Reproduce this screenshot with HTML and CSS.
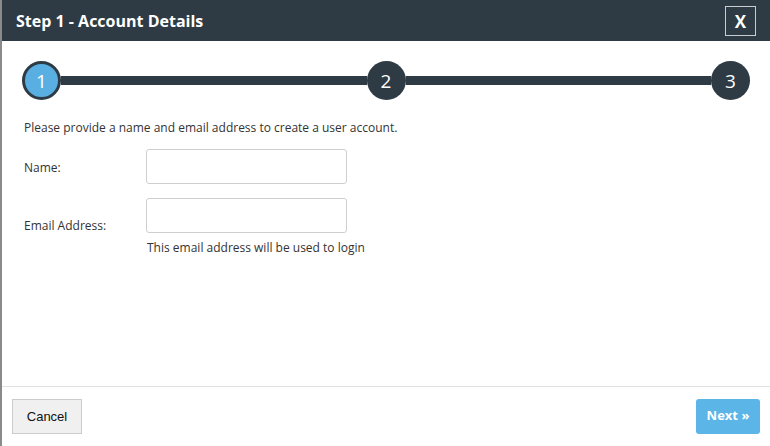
FILE: index.html
```html
<!DOCTYPE html>
<html>
<head>
<meta charset="utf-8">
<link rel="stylesheet" href="styles.css">
</head>
<body>
<div class="modal">
  <div class="header">
    <h1 class="title">Step 1 - Account Details</h1>
    <button class="close">X</button>
  </div>
  <div class="body">
    <div class="stepper">
      <div class="step active">1</div>
      <div class="bar"></div>
      <div class="step">2</div>
      <div class="bar"></div>
      <div class="step">3</div>
    </div>
    <p class="intro">Please provide a name and email address to create a user account.</p>
    <div class="row">
      <label class="label">Name:</label>
      <div class="field"><input class="input" type="text"></div>
    </div>
    <div class="row row-email">
      <label class="label">Email Address:</label>
      <div class="field">
        <input class="input" type="text">
        <div class="help">This email address will be used to login</div>
      </div>
    </div>
  </div>
  <div class="footer">
    <button class="btn cancel">Cancel</button>
    <button class="btn next">Next »</button>
  </div>
</div>
</body>
</html>
```
FILE: styles.css
```css
* { box-sizing: border-box; }
html, body { margin: 0; height: 100%; }
body {
  background: #8a8a8a;
  font-family: "Open Sans", sans-serif;
  color: #333;
}
.modal {
  margin-left: 2px;
  height: 446px;
  background: #fff;
  display: flex;
  flex-direction: column;
}
.header {
  height: 41px;
  background: #2e3b45;
  display: flex;
  align-items: center;
  justify-content: space-between;
  padding: 0 14px 0 14px;
}
.title {
  margin: 0;
  color: #fff;
  font-size: 16px;
  font-weight: 700;
  letter-spacing: 0;
}
.close {
  width: 31px;
  height: 30px;
  margin-top: 1px;
  background: transparent;
  border: 1px solid #c8cdd1;
  color: #fff;
  font-family: "Open Sans", sans-serif;
  font-weight: 700;
  font-size: 17px;
  padding: 0;
  line-height: 1;
}
.body {
  flex: 1;
  padding: 20px 0 0 22px;
}
.stepper {
  display: flex;
  align-items: center;
  width: 728px;
  margin-left: -2px;
}
.step {
  width: 39px;
  height: 39px;
  border-radius: 50%;
  background: #2e3b45;
  color: #fff;
  font-size: 19px;
  display: flex;
  align-items: center;
  justify-content: center;
  flex: none;
}
.step.active {
  background: #5aafe2;
  border: 3px solid #2e3b45;
}
.bar {
  flex: 1;
  height: 9px;
  background: #2e3b45;
}
.intro {
  margin: 19px 0 0 0;
  font-size: 12px;
}
.row {
  display: flex;
  align-items: flex-start;
  margin-top: 13px;
}
.row-email { margin-top: 14px; }
.label {
  width: 122px;
  font-size: 12px;
  padding-top: 10px;
}
.row-email .label { padding-top: 19px; }
.input {
  display: block;
  width: 201px;
  height: 35px;
  border: 1px solid #cfcfcf;
  border-radius: 3px;
  margin: 0;
}
.help {
  font-size: 12px;
  margin-top: 6px;
  margin-left: 1px;
}
.footer {
  border-top: 1px solid #e2e2e2;
  height: 60px;
  display: flex;
  justify-content: space-between;
  align-items: flex-start;
  padding: 12px 10px 0 10px;
}
.btn {
  height: 35px;
  font-size: 13px;
  padding: 0;
}
.cancel {
  width: 70px;
  background: #f0f0f0;
  border: 1px solid #cccccc;
  color: #111;
  font-family: "Liberation Sans", Arial, sans-serif;
}
.next {
  width: 64px;
  background: #5bb5e6;
  border: none;
  border-radius: 3px;
  color: #fff;
  font-family: "Open Sans", sans-serif;
  font-weight: 700;
  padding-bottom: 3px;
}
```
